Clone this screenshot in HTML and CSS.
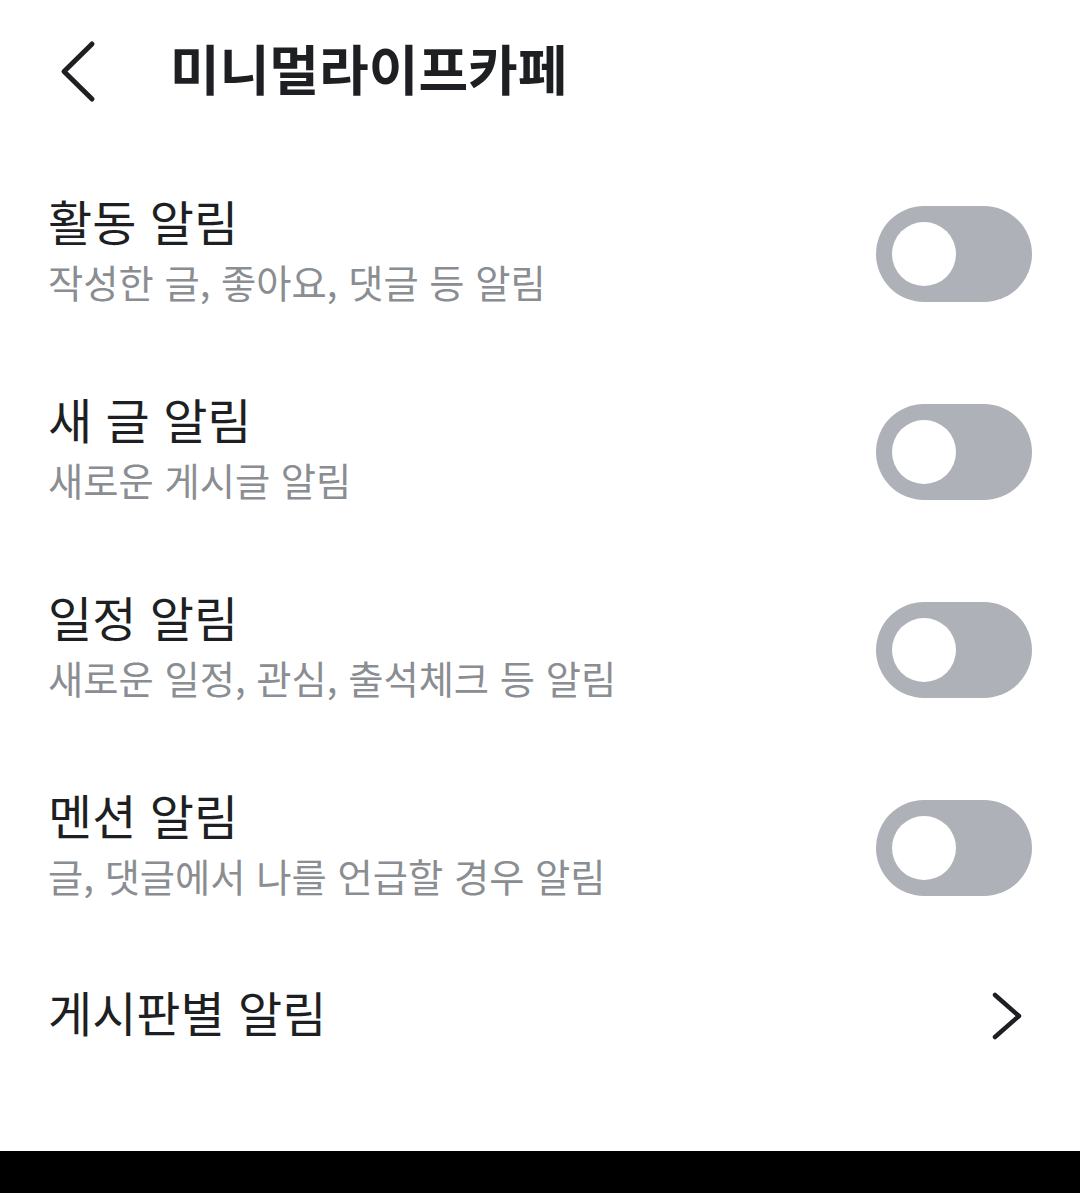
FILE: index.html
```html
<!DOCTYPE html>
<html lang="ko">
<head>
<meta charset="utf-8">
<link rel="stylesheet" href="styles.css">
</head>
<body>
<div class="page">
  <header class="header">
    <svg class="back" width="60" height="70" viewBox="0 0 60 70">
      <path d="M44 11 L16 38.5 L44 66" fill="none" stroke="#1e1f22" stroke-width="5" stroke-linecap="round" stroke-linejoin="round"/>
    </svg>
    <h1 class="title">미니멀라이프카페</h1>
  </header>
  <main class="list">
    <div class="row">
      <div class="texts">
        <div class="row-title">활동 알림</div>
        <div class="row-sub">작성한 글, 좋아요, 댓글 등 알림</div>
      </div>
      <div class="toggle"><span class="knob"></span></div>
    </div>
    <div class="row">
      <div class="texts">
        <div class="row-title">새 글 알림</div>
        <div class="row-sub">새로운 게시글 알림</div>
      </div>
      <div class="toggle"><span class="knob"></span></div>
    </div>
    <div class="row">
      <div class="texts">
        <div class="row-title">일정 알림</div>
        <div class="row-sub">새로운 일정, 관심, 출석체크 등 알림</div>
      </div>
      <div class="toggle"><span class="knob"></span></div>
    </div>
    <div class="row">
      <div class="texts">
        <div class="row-title">멘션 알림</div>
        <div class="row-sub">글, 댓글에서 나를 언급할 경우 알림</div>
      </div>
      <div class="toggle"><span class="knob"></span></div>
    </div>
    <div class="row row-link">
      <div class="row-title">게시판별 알림</div>
      <svg class="chev" width="40" height="56" viewBox="0 0 40 56">
        <path d="M5 7 L29 28 L5 49" fill="none" stroke="#1e1f22" stroke-width="4.5" stroke-linecap="round" stroke-linejoin="round"/>
      </svg>
    </div>
  </main>
  <div class="navbar"></div>
</div>
</body>
</html>
```
FILE: styles.css
```css
html, body {
  margin: 0;
  padding: 0;
  background: #ffffff;
}
body {
  font-family: "Noto Sans CJK KR", "Noto Sans", sans-serif;
  color: #1e1f22;
}
.page {
  height: 1193px;
  display: flex;
  flex-direction: column;
}
.header {
  height: 136px;
  display: flex;
  align-items: center;
  padding-left: 48px;
}
.back {
  display: block;
  flex: none;
}
.title {
  margin: 0 0 0 62px;
  font-size: 54px;
  font-weight: 700;
  line-height: 1;
}
.list {
  flex: 1;
  margin-top: 19px;
  display: flex;
  flex-direction: column;
}
.row {
  height: 198px;
  display: flex;
  align-items: center;
  justify-content: space-between;
  padding: 0 48px;
}
.texts {
  display: flex;
  flex-direction: column;
  margin-bottom: 4px;
}
.row-title {
  font-size: 48px;
  line-height: 60px;
  color: #1e1f22;
}
.row-sub {
  font-size: 38.3px;
  line-height: 64px;
  color: #8a8d91;
}
.toggle {
  width: 156px;
  height: 96px;
  border-radius: 48px;
  background: #aeb1b7;
  display: flex;
  align-items: center;
  padding-left: 16px;
  box-sizing: border-box;
  flex: none;
}
.knob {
  width: 64px;
  height: 64px;
  border-radius: 50%;
  background: #ffffff;
}
.row-link {
  height: 128px;
  padding-right: 50px;
}
.chev {
  display: block;
  margin-top: 10px;
}
.navbar {
  height: 42px;
  background: #000000;
  flex: none;
}
```
